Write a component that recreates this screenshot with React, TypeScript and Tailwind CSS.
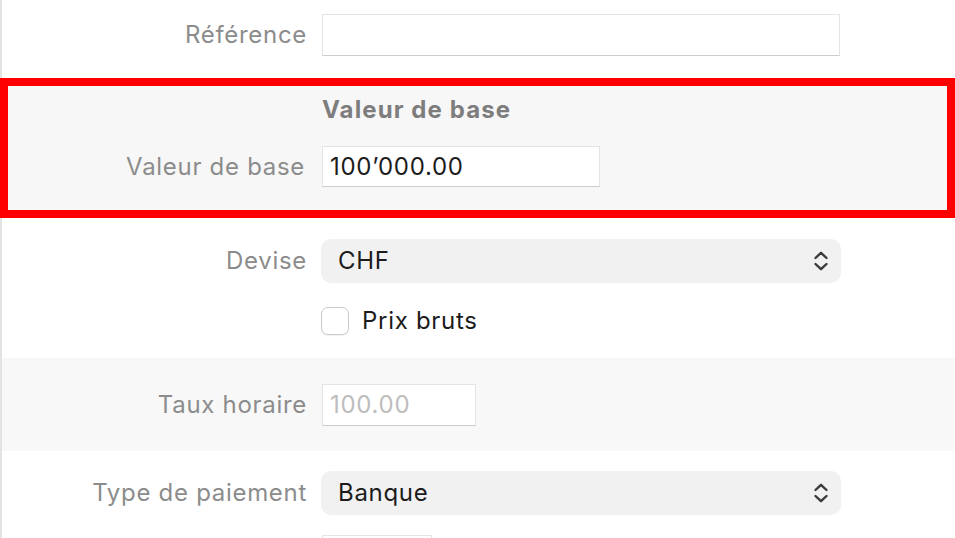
import React from 'react';

const FONT = { fontFamily: 'Inter, "Helvetica Neue", "Liberation Sans", sans-serif' };

const Label = ({ children }: { children: React.ReactNode }) => (
  <div className="w-[305px] shrink-0 text-right text-[24px] leading-none tracking-[0.7px] text-[#8c8c8c]">
    {children}
  </div>
);

const Row = ({ label, children }: { label?: string; children: React.ReactNode }) => (
  <div className="flex items-center gap-[15px]">
    <Label>{label}</Label>
    {children}
  </div>
);

const TextBox = ({
  value,
  placeholder,
  className = '',
}: {
  value?: string;
  placeholder?: string;
  className?: string;
}) => (
  <div
    className={`flex items-center border border-[#e4e4e4] border-b-[#cdcdcd] bg-white pl-[7px] text-[24px] leading-none tracking-[0.7px] ${className}`}
  >
    {value ? (
      <span className="text-[#1c1c1c]">{value}</span>
    ) : (
      <span className="text-[#bdbdbd]">{placeholder}</span>
    )}
  </div>
);

const Chevrons = () => (
  <svg width="16" height="22" viewBox="0 0 16 22" fill="none" className="text-[#3a3a3a]">
    <path d="M2.5 8L8 2.8L13.5 8" stroke="currentColor" strokeWidth="2.4" strokeLinecap="round" strokeLinejoin="round" />
    <path d="M2.5 14L8 19.2L13.5 14" stroke="currentColor" strokeWidth="2.4" strokeLinecap="round" strokeLinejoin="round" />
  </svg>
);

const Select = ({ value }: { value: string }) => (
  <div className="-ml-px flex h-[44px] w-[520px] items-center justify-between rounded-[10px] bg-[#f1f1f1] pl-[17px] pr-[12px]">
    <span className="text-[24px] leading-none tracking-[0.7px] text-[#1c1c1c]">{value}</span>
    <Chevrons />
  </div>
);

export default function App() {
  return (
    <div className="h-[538px] w-[955px] overflow-hidden bg-white" style={FONT}>
      <div className="border-l-2 border-[#e3e3e3] pb-[22px] pt-[14px]">
        <Row label="Référence">
          <TextBox className="h-[42px] w-[518px]" />
        </Row>
      </div>

      <div className="border-8 border-[#ff0000] bg-[#f7f7f7] pb-[23px] pt-[10px]">
        <div className="flex h-[28px] items-center pl-[314px] text-[24px] font-bold tracking-[1.1px] text-[#7d7d7d]">
          Valeur de base
        </div>
        <div className="mt-[22px] flex items-center gap-[17px]">
          <div className="w-[297px] shrink-0 text-right text-[24px] leading-none tracking-[0.7px] text-[#8c8c8c]">
            Valeur de base
          </div>
          <TextBox value="100’000.00" className="h-[41px] w-[278px]" />
        </div>
      </div>

      <div className="flex flex-col gap-[24px] border-l-2 border-[#e3e3e3] pb-[23px] pt-[21px]">
        <Row label="Devise">
          <Select value="CHF" />
        </Row>
        <div className="flex items-center gap-[13px] pl-[319px]">
          <div className="h-[28px] w-[28px] rounded-[7px] border border-[#cacaca] bg-white shadow-[0_1px_1px_rgba(0,0,0,0.06)]" />
          <span className="text-[24px] leading-none tracking-[0.7px] text-[#1c1c1c]">Prix bruts</span>
        </div>
      </div>

      <div className="border-l-2 border-[#e3e3e3] bg-[#f8f8f8] pb-[25px] pt-[26px]">
        <Row label="Taux horaire">
          <TextBox placeholder="100.00" className="h-[42px] w-[154px]" />
        </Row>
      </div>

      <div className="flex flex-col gap-[20px] border-l-2 border-[#e3e3e3] pt-[20px]">
        <Row label="Type de paiement">
          <Select value="Banque" />
        </Row>
        <div className="pl-[320px]">
          <TextBox className="h-[42px] w-[110px]" />
        </div>
      </div>
    </div>
  );
}
